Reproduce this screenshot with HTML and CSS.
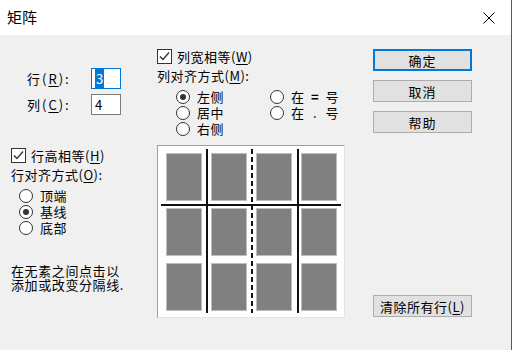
FILE: index.html
```html
<!DOCTYPE html>
<html lang="zh-CN">

<head>
  <meta charset="UTF-8">
  <meta name="viewport" content="width=device-width, initial-scale=1.0">
  <title>矩阵</title>
  <link rel="stylesheet" href="styles.css">
</head>

<body>
  <div class="window">
    <header class="titlebar">
      <span class="title">矩阵</span>
      <svg class="close" width="12" height="12" viewBox="0 0 12 12">
        <path d="M0.5 0.5 L11.5 11.5 M11.5 0.5 L0.5 11.5" stroke="#000" stroke-width="1" fill="none" />
      </svg>
    </header>

    <div class="dialog">
      <!-- rows / columns and row options -->
      <div class="col col-left">
        <div class="size-grid">
          <span class="size-label">行(<u>R</u>):</span>
          <span class="field field-focus"><span class="sel">3</span></span>
          <span class="size-label">列(<u>C</u>):</span>
          <span class="field">4</span>
        </div>

        <div class="check check-rows">
          <span class="box"><svg width="13" height="13" viewBox="0 0 13 13"><path d="M2 6.5 L5 9.5 L11 2.5" stroke="#333" stroke-width="1.4" fill="none" /></svg></span>
          <span>行高相等(<u>H</u>)</span>
        </div>
        <div class="group-label">行对齐方式(<u>O</u>):</div>
        <div class="radios radios-rows">
          <div class="radio"><span class="dot"></span><span>顶端</span></div>
          <div class="radio"><span class="dot on"></span><span>基线</span></div>
          <div class="radio"><span class="dot"></span><span>底部</span></div>
        </div>

        <p class="note">在无素之间点击以<br>添加或改变分隔线.</p>
      </div>

      <!-- column options and the matrix preview -->
      <div class="col col-mid">
        <div class="check">
          <span class="box"><svg width="13" height="13" viewBox="0 0 13 13"><path d="M2 6.5 L5 9.5 L11 2.5" stroke="#333" stroke-width="1.4" fill="none" /></svg></span>
          <span>列宽相等(<u>W</u>)</span>
        </div>
        <div class="group-label">列对齐方式(<u>M</u>):</div>
        <div class="radios radios-cols">
          <div class="radio"><span class="dot on"></span><span>左侧</span></div>
          <div class="radio"><span class="dot"></span><span>在<span class="mid"> <b>=</b> </span>号</span></div>
          <div class="radio"><span class="dot"></span><span>居中</span></div>
          <div class="radio"><span class="dot"></span><span>在<span class="mid"> . </span>号</span></div>
          <div class="radio"><span class="dot"></span><span>右侧</span></div>
        </div>

        <div class="preview">
          <div class="cells">
            <span></span><span></span><span></span><span></span>
            <span></span><span></span><span></span><span></span>
            <span></span><span></span><span></span><span></span>
          </div>
          <svg class="lines" width="186" height="171" viewBox="0 0 186 171">
            <path d="M49 3 V167 M140 3 V167 M3 59 H183" stroke="#111" stroke-width="2" fill="none" />
            <path d="M94 3 V167" stroke="#111" stroke-width="2" stroke-dasharray="5 3" fill="none" />
          </svg>
        </div>
      </div>

      <!-- buttons -->
      <div class="col col-right">
        <button class="btn btn-default">确定</button>
        <button class="btn">取消</button>
        <button class="btn">帮助</button>
        <button class="btn btn-clear">清除所有行(<u>L</u>)</button>
      </div>
    </div>
  </div>
</body>

</html>
```

FILE: styles.css
```css
body {
  margin: 0;
  background-color: #f0f0f0;
  font-family: "Noto Sans CJK SC", "Noto Sans", sans-serif;
  font-size: 13px;
  color: #000;
}

.window {
  box-sizing: border-box;
  width: 512px;
  height: 350px;
  border-right: 1px solid #5a5a5a;
  background-color: #f0f0f0;
  overflow: hidden;
}

.titlebar {
  height: 35px;
  background-color: #fff;
  display: flex;
  align-items: center;
  justify-content: space-between;
  padding-inline: 7px 16px;
}

.title {
  font-size: 15px;
  line-height: 1;
  margin-top: -3px;
}

.close {
  display: block;
}

.dialog {
  display: flex;
  padding: 13px 0 0 11px;
  height: 302px;
}

.col {
  display: flex;
  flex-direction: column;
}

.col-left {
  width: 146px;
}

.col-mid {
  width: 188px;
}

.col-right {
  width: 99px;
  margin-left: 28px;
}

u {
  text-decoration-thickness: 1px;
  text-underline-offset: 2px;
}

/* rows / columns inputs */
.size-grid {
  margin-top: 20px;
  padding-left: 16px;
  display: grid;
  grid-template-columns: 64px 30px;
  row-gap: 5px;
  align-items: center;
}

.size-label {
  letter-spacing: 2px;
}

.field {
  box-sizing: border-box;
  height: 21px;
  border: 1px solid #7a7a7a;
  background-color: #fff;
  padding-left: 3px;
  line-height: 19px;
}

.field-focus {
  border-color: #0078d7;
}

.sel {
  background-color: #0078d7;
  color: #fff;
  padding-inline: 1px;
}

/* checkbox and radios */
.check {
  display: flex;
  align-items: center;
  gap: 5px;
  height: 16px;
  letter-spacing: 0.5px;
}

.check-rows {
  margin-top: 32px;
}

.box {
  box-sizing: border-box;
  width: 15px;
  height: 15px;
  border: 1px solid #333;
  background-color: #fff;
  display: flex;
  align-items: center;
  justify-content: center;

  & svg {
    display: block;
  }
}

.group-label {
  margin-top: 5px;
  line-height: 14px;
  letter-spacing: 0.5px;
}

.radios {
  margin-top: 6px;
  display: grid;
  grid-auto-rows: 16px;
}

.radios-rows {
  padding-left: 8px;
}

.radios-cols {
  padding-left: 19px;
  grid-template-columns: 94px auto;
}

.radio {
  display: flex;
  align-items: center;
  gap: 7px;
  letter-spacing: 0.5px;
  white-space: pre;
  line-height: 16px;
}

.mid {
  display: inline-block;
  width: 21px;
  text-align: center;
}

.dot {
  box-sizing: border-box;
  width: 14px;
  height: 14px;
  border: 1px solid #333;
  border-radius: 50%;
  background-color: #fff;
  display: flex;
  align-items: center;
  justify-content: center;
}

.dot.on::after {
  content: "";
  width: 6px;
  height: 6px;
  border-radius: 50%;
  background-color: #333;
}

.note {
  margin: 28px 0 0;
  line-height: 14px;
  letter-spacing: 0.6px;
}

/* matrix preview */
.preview {
  position: relative;
  margin-top: 8px;
  box-sizing: border-box;
  width: 188px;
  height: 173px;
  background-color: #fff;
  border: 1px solid;
  border-color: #a0a0a0 #e3e3e3 #e3e3e3 #a0a0a0;
}

.cells {
  display: grid;
  grid-template-columns: repeat(4, 36px);
  grid-template-rows: repeat(3, 48px);
  column-gap: 9px;
  row-gap: 7px;
  padding: 7px 0 0 8px;

  & span {
    box-sizing: border-box;
    background-color: #808080;
    border: 1px solid #bdbdbd;
  }
}

.lines {
  position: absolute;
  inset: 0;
}

/* buttons */
.btn {
  box-sizing: border-box;
  height: 22px;
  margin-top: 9px;
  padding: 0;
  background-color: #e1e1e1;
  border: 1px solid #adadad;
  font-family: inherit;
  font-size: 13px;
  letter-spacing: 1px;
  color: #000;
}

.btn-default {
  margin-top: 1px;
  border: 2px solid #0078d7;
}

.btn-clear {
  margin-top: 162px;
  letter-spacing: 0.5px;
}
```
